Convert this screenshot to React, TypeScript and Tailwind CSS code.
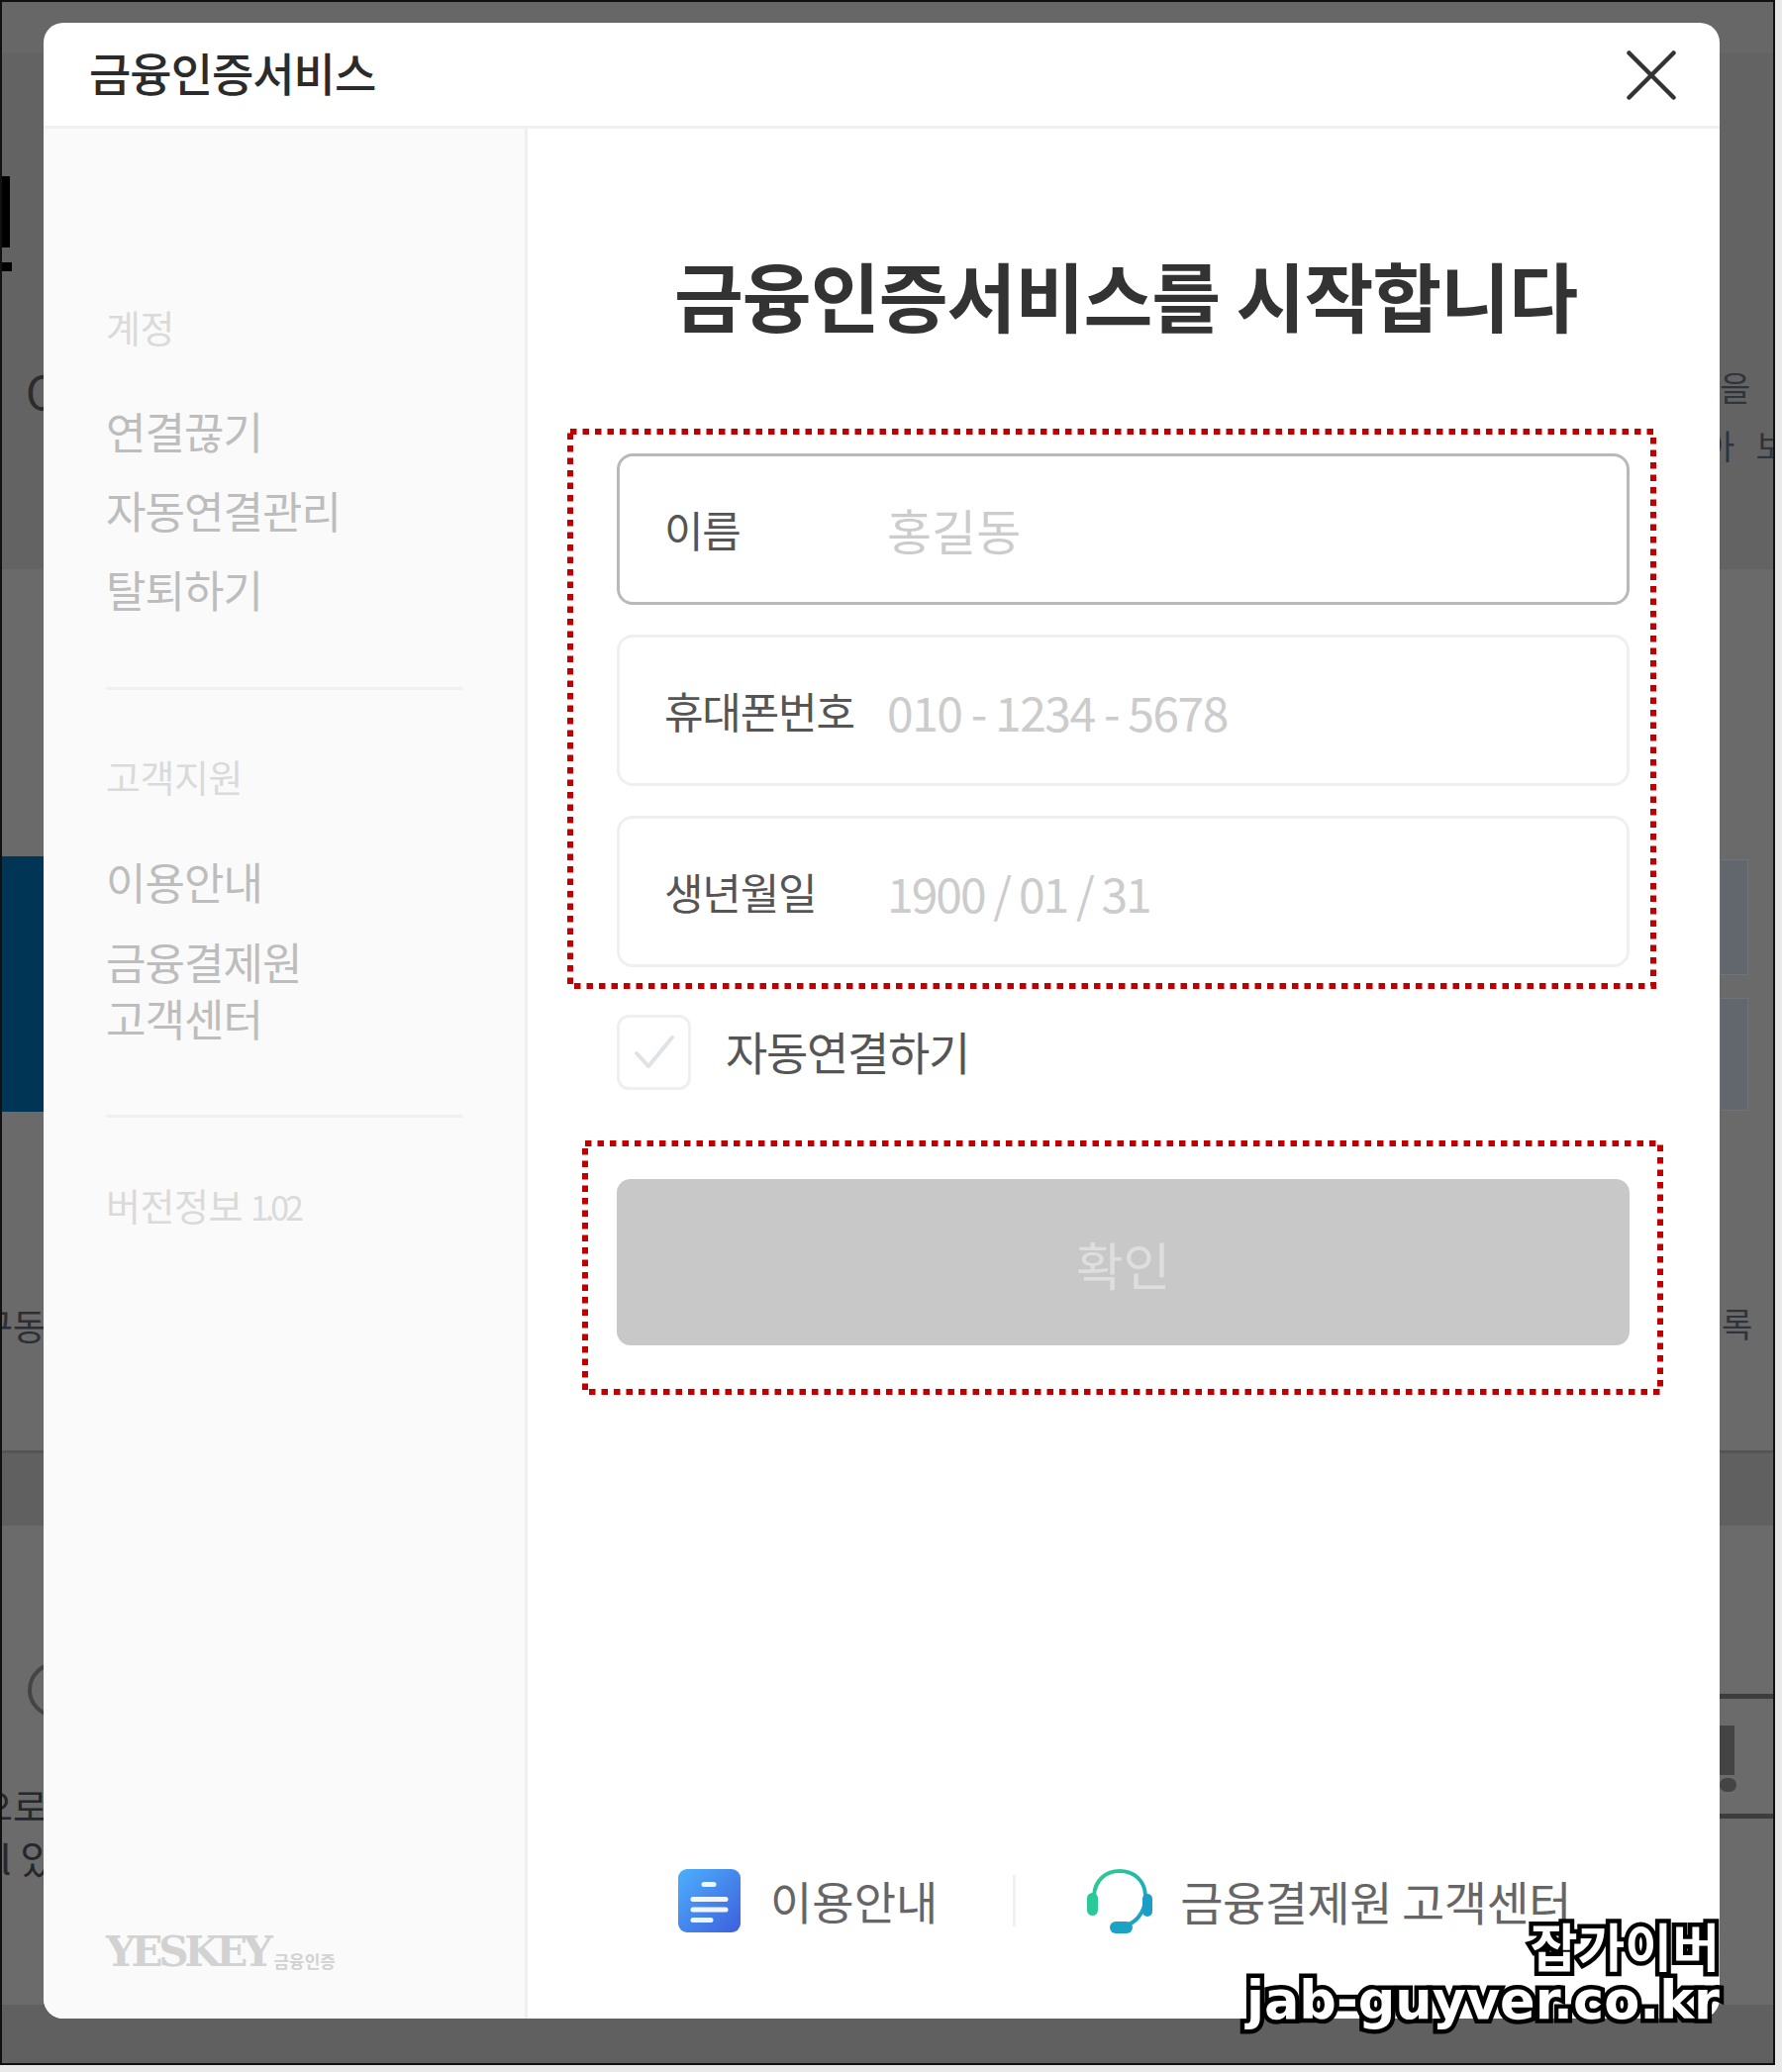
const font = "font-['Noto_Sans_CJK_KR','Noto_Sans',sans-serif]";

function RedBox({ w, h, className, children }: { w: number; h: number; className: string; children: React.ReactNode }) {
  return (
    <div className={`relative ${className}`}>
      <svg width={w} height={h} className="absolute left-0 top-0">
        <rect x="3" y="3" width={w - 6} height={h - 6} fill="none" stroke="#c00000" strokeWidth="6" strokeDasharray="6.5 6" />
      </svg>
      {children}
    </div>
  );
}

function Field({ label, hint, active, hintClass }: { label: string; hint: string; active?: boolean; hintClass?: string }) {
  return (
    <div className={`flex h-[153px] items-center rounded-[16px] border-[3px] bg-white pl-[45px] ${active ? "border-[#b9b9b9]" : "border-[#efefef]"}`}>
      <span className="w-[225px] shrink-0 text-[43px] tracking-[-1.2px] text-[#555]">{label}</span>
      <span className={`text-[#cccccc] ${hintClass ?? ""}`}>{hint}</span>
    </div>
  );
}

function CloseIcon() {
  return (
    <svg width="50" height="50" viewBox="0 0 50 50">
      <path d="M2.5 2.5l45 45M47.5 2.5l-45 45" fill="none" stroke="#333" strokeWidth="4.5" strokeLinecap="round" />
    </svg>
  );
}

function DocIcon() {
  return (
    <svg width="63" height="64" viewBox="0 0 63 64">
      <defs>
        <linearGradient id="docfill" x1="0" y1="0" x2="1" y2="1">
          <stop offset="0" stopColor="#4cb0fc" />
          <stop offset="1" stopColor="#3e5fdc" />
        </linearGradient>
      </defs>
      <rect width="63" height="64" rx="9" fill="url(#docfill)" />
      <g stroke="#fff" strokeWidth="5" strokeLinecap="round" opacity="0.92">
        <path d="M26 15.5h10" />
        <path d="M15 30.5h33" />
        <path d="M15 41h33" />
        <path d="M15 51.5h18" />
      </g>
    </svg>
  );
}

function HeadsetIcon() {
  return (
    <svg width="66" height="66" viewBox="0 0 66 66">
      <defs>
        <linearGradient id="setfill" x1="0" y1="0" x2="1" y2="1">
          <stop offset="0" stopColor="#2fd08f" />
          <stop offset="1" stopColor="#189dc8" />
        </linearGradient>
      </defs>
      <path d="M7 28C8 12 19 3 33 3s25 9 26 24c1 13-6 25-17 30" fill="none" stroke="url(#setfill)" strokeWidth="4" strokeLinecap="round" />
      <rect x="0" y="25" width="11" height="23" rx="5.5" fill="#29c99a" />
      <rect x="56" y="26" width="10" height="23" rx="5" fill="#1c9dc8" />
      <rect x="23" y="54" width="23" height="12" rx="6" fill="#1aa3c4" />
    </svg>
  );
}

export default function App() {
  return (
    <div className={`h-[2093px] w-[1800px] overflow-hidden bg-[#e9e9e9] ${font}`}>
      <div className="relative h-[2086px] w-[1793px] overflow-hidden border-2 border-[#111] bg-[#666]">
        {/* page behind the dialog */}
        <div className="h-[52px] bg-[#676767]" />
        <div className="flex h-[521px] justify-between bg-[#636363]">
          <div className="w-[42px] overflow-hidden">
            <div className="mt-[124px] h-[72px] w-[8px] bg-black" />
            <div className="mt-[15px] h-[9px] w-[10px] bg-black" />
            <div className="ml-[24px] mt-[92px] whitespace-nowrap text-[46px] leading-[56px] text-[#2c2c2c]">C</div>
          </div>
          <div className="w-[54px] overflow-hidden pt-[316px] text-[34px] leading-[42px] text-[#30343a]">
            <div>을</div>
            <div className="ml-[-16px] mt-[17px] whitespace-nowrap tracking-[2px]">아 &nbsp;보</div>
          </div>
        </div>
        <div className="flex h-[890px] justify-between bg-[#6a6a6a]">
          <div className="w-[42px] overflow-hidden">
            <div className="mt-[290px] h-[258px] bg-[#003556]" />
            <div className="ml-[-22px] mt-[190px] whitespace-nowrap text-[36px] leading-[50px] text-[#2c2e33]">구동</div>
          </div>
          <div className="w-[54px] overflow-hidden">
            <div className="mt-[293px] h-[117px] w-[29px] border border-[#70747a] bg-[#62676e]" />
            <div className="mt-[23px] h-[114px] w-[29px] border border-[#70747a] bg-[#62676e]" />
            <div className="ml-[2px] mt-[190px] whitespace-nowrap text-[34px] leading-[50px] text-[#30343a]">록</div>
          </div>
        </div>
        <div className="h-[76px] border-t-[3px] border-[#555] bg-[#606060]" />
        <div className="flex h-[484px] justify-between bg-[#6b6b6b]">
          <div className="w-[42px] overflow-hidden">
            <div className="ml-[26px] mt-[138px] h-[56px] w-[56px] rounded-full border-[4px] border-[#444]" />
            <div className="ml-[-24px] mt-[64px] whitespace-nowrap text-[38px] leading-[48px] text-[#25272b]">으로</div>
            <div className="ml-[-2px] mt-[4px] whitespace-nowrap text-[40px] leading-[50px] text-[#25272b]">l 있</div>
          </div>
          <div className="w-[54px] overflow-hidden">
            <div className="mt-[170px] h-[5px] bg-[#3d3d3d]" />
            <div className="mt-[27px] h-[50px] w-[15px] bg-[#444]" />
            <div className="mt-[3px] h-[14px] w-[17px] rounded-full bg-[#444]" />
            <div className="mt-[22px] h-[5px] bg-[#3d3d3d]" />
          </div>
        </div>
        <div className="h-[59px] bg-[#606060]" />

        {/* dialog */}
        <div className="absolute left-[42px] top-[21px] flex h-[2016px] w-[1693px] flex-col overflow-hidden rounded-[20px] bg-white">
          <div className="flex h-[107px] shrink-0 items-center justify-between border-b-[3px] border-[#f0f0f0] pl-[46px] pr-[44px]">
            <h1 className="pb-[5px] text-[46px] font-medium tracking-[-1px] text-[#2b2b2b]">금융인증서비스</h1>
            <div className="pt-[2px]">
              <CloseIcon />
            </div>
          </div>
          <div className="flex min-h-0 flex-1">
            <aside className="flex w-[489px] shrink-0 flex-col border-r-[3px] border-[#efefef] bg-[#fafafa] pl-[63px] pr-[63px]">
              <p className="mt-[175px] text-[38px] leading-[50px] tracking-[-0.5px] text-[#dadada]">계정</p>
              <ul className="mb-[59px] mt-[40px] text-[44px] leading-[80px] tracking-[-1px] text-[#bdbdbd]">
                <li>연결끊기</li>
                <li>자동연결관리</li>
                <li>탈퇴하기</li>
              </ul>
              <div className="h-[3px] bg-[#f0f0f0]" />
              <p className="mt-[62px] text-[38px] leading-[50px] tracking-[-0.5px] text-[#dadada]">고객지원</p>
              <p className="mt-[41px] text-[44px] leading-[80px] tracking-[-1px] text-[#bdbdbd]">이용안내</p>
              <p className="mb-[69px] mt-[13px] text-[44px] leading-[57px] tracking-[-1px] text-[#bdbdbd]">
                금융결제원
                <br />
                고객센터
              </p>
              <div className="h-[3px] bg-[#f0f0f0]" />
              <p className="mt-[63px] text-[38px] leading-[50px] tracking-[-0.5px] text-[#dadada]">
                버전정보 <span className="text-[34px] tracking-[-4px]">1.02</span>
              </p>
              <div className="mb-[46px] mt-auto flex items-end gap-[5px] text-[#d2d2d2]">
                <span className="font-['DejaVu_Serif',serif] text-[42px] font-bold leading-[42px] tracking-[-4.4px]">YESKEY</span>
                <span className="text-[17px] font-bold leading-[24px]">금융인증</span>
              </div>
            </aside>

            <main className="flex min-w-0 flex-1 flex-col">
              <h2 className="mb-[81px] mt-[112px] pl-[4px] text-center text-[76px] font-bold leading-[110px] tracking-[-1px] text-[#333]">
                금융인증서비스를 시작합니다
              </h2>
              <RedBox w={1100} h={566} className="ml-[40px] w-[1100px] pb-[23px] pl-[50px] pr-[27px] pt-[25px]">
                <div className="relative flex flex-col gap-[30px]">
                  <Field label="이름" hint="홍길동" active hintClass="text-[49px]" />
                  <Field label="휴대폰번호" hint="010 - 1234 - 5678" hintClass="text-[48px] tracking-[-1.5px]" />
                  <Field label="생년월일" hint="1900 / 01 / 31" hintClass="text-[48px] tracking-[-2px]" />
                </div>
              </RedBox>
              <div className="ml-[90px] mt-[25px] flex items-center gap-[35px]">
                <div className="flex h-[76px] w-[75px] items-center justify-center rounded-[12px] border-[3px] border-[#efefef]">
                  <svg width="44" height="36" viewBox="0 0 44 36">
                    <path d="M4 19l12 13L40 3" fill="none" stroke="#dfe2e6" strokeWidth="4" strokeLinecap="round" strokeLinejoin="round" />
                  </svg>
                </div>
                <span className="pb-[4px] text-[46px] tracking-[-1.3px] text-[#555]">자동연결하기</span>
              </div>
              <RedBox w={1092} h={257} className="ml-[55px] mt-[51px] w-[1092px] pb-[50px] pl-[35px] pr-[34px] pt-[39px]">
                <button className="relative flex h-[168px] w-full items-center justify-center rounded-[14px] bg-[#c8c8c8] pt-[3px] text-[52px] text-[#dedede]">
                  확인
                </button>
              </RedBox>
              <div className="mb-[84px] ml-[152px] mt-auto flex items-center text-[#666]">
                <DocIcon />
                <span className="ml-[30px] text-[46px]">이용안내</span>
                <div className="ml-[76px] h-[52px] w-[3px] bg-[#f0f0f0]" />
                <div className="ml-[72px]">
                  <HeadsetIcon />
                </div>
                <span className="ml-[28px] whitespace-nowrap text-[47px] tracking-[-0.5px]">금융결제원 고객센터</span>
              </div>
            </main>
          </div>
        </div>

        {/* watermark */}
        <div className="absolute right-[54px] top-[1935px] flex flex-col items-end text-white [-webkit-text-stroke:9px_#000] [paint-order:stroke_fill]">
          <span className="text-[52px] font-bold leading-[56px]">잡가이버</span>
          <span className="font-['DejaVu_Sans',sans-serif] text-[52.5px] font-bold leading-[56px]">jab-guyver.co.kr</span>
        </div>
      </div>
    </div>
  );
}
